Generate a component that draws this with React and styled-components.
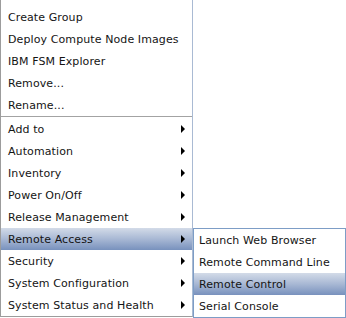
import styled, { createGlobalStyle } from 'styled-components';

const Global = createGlobalStyle`
  body {
    margin: 0;
    background: #ffffff;
    font-family: "DejaVu Sans", Verdana, sans-serif;
  }
`;

const Stage = styled.div`
  position: relative;
  width: 346px;
  height: 318px;
  overflow: hidden;
  display: flex;
  align-items: flex-start;
`;

const Menu = styled.div`
  width: 191px;
  background: #ffffff;
  border: 1px solid #9c9c9c;
  border-right-color: #a9bad3;
  border-top: none;
  padding: 6px 0 0;
  display: flex;
  flex-direction: column;
`;

const SubMenu = styled.div`
  margin-top: 228px;
  width: 151px;
  background: #ffffff;
  border: 1px solid #7d9dc6;
  padding: 0;
  display: flex;
  flex-direction: column;
`;

const Item = styled.div`
  height: 22px;
  display: flex;
  align-items: center;
  justify-content: space-between;
  padding: 0 7px 0 ${(p) => p.$indent || 7}px;
  font-size: 11px;
  letter-spacing: 0.1px;
  color: #141414;
  white-space: nowrap;
  background: ${(p) =>
    p.$active ? 'linear-gradient(to bottom, #d3dbe8 0%, #a8b8d4 50%, #7891bd 100%)' : 'transparent'};
`;

const Separator = styled.div`
  height: 1px;
  margin: 0 0 1px;
  background: #a3a3a3;
`;

const Arrow = styled.span`
  width: 0;
  height: 0;
  border-top: 4px solid transparent;
  border-bottom: 4px solid transparent;
  border-left: 4px solid #000000;
  margin-right: 0;
`;

const top = ['Create Group', 'Deploy Compute Node Images', 'IBM FSM Explorer', 'Remove...', 'Rename...'];
const subs = [
  'Add to',
  'Automation',
  'Inventory',
  'Power On/Off',
  'Release Management',
  'Remote Access',
  'Security',
  'System Configuration',
  'System Status and Health',
];
const remote = ['Launch Web Browser', 'Remote Command Line', 'Remote Control', 'Serial Console'];

export default function App() {
  return (
    <>
      <Global />
      <Stage>
        <Menu>
          {top.map((t) => (
            <Item key={t}>{t}</Item>
          ))}
          <Separator />
          {subs.map((t) => (
            <Item key={t} $active={t === 'Remote Access'}>
              {t}
              <Arrow />
            </Item>
          ))}
        </Menu>
        <SubMenu>
          {remote.map((t) => (
            <Item key={t} $indent={5} $active={t === 'Remote Control'}>
              {t}
            </Item>
          ))}
        </SubMenu>
      </Stage>
    </>
  );
}
